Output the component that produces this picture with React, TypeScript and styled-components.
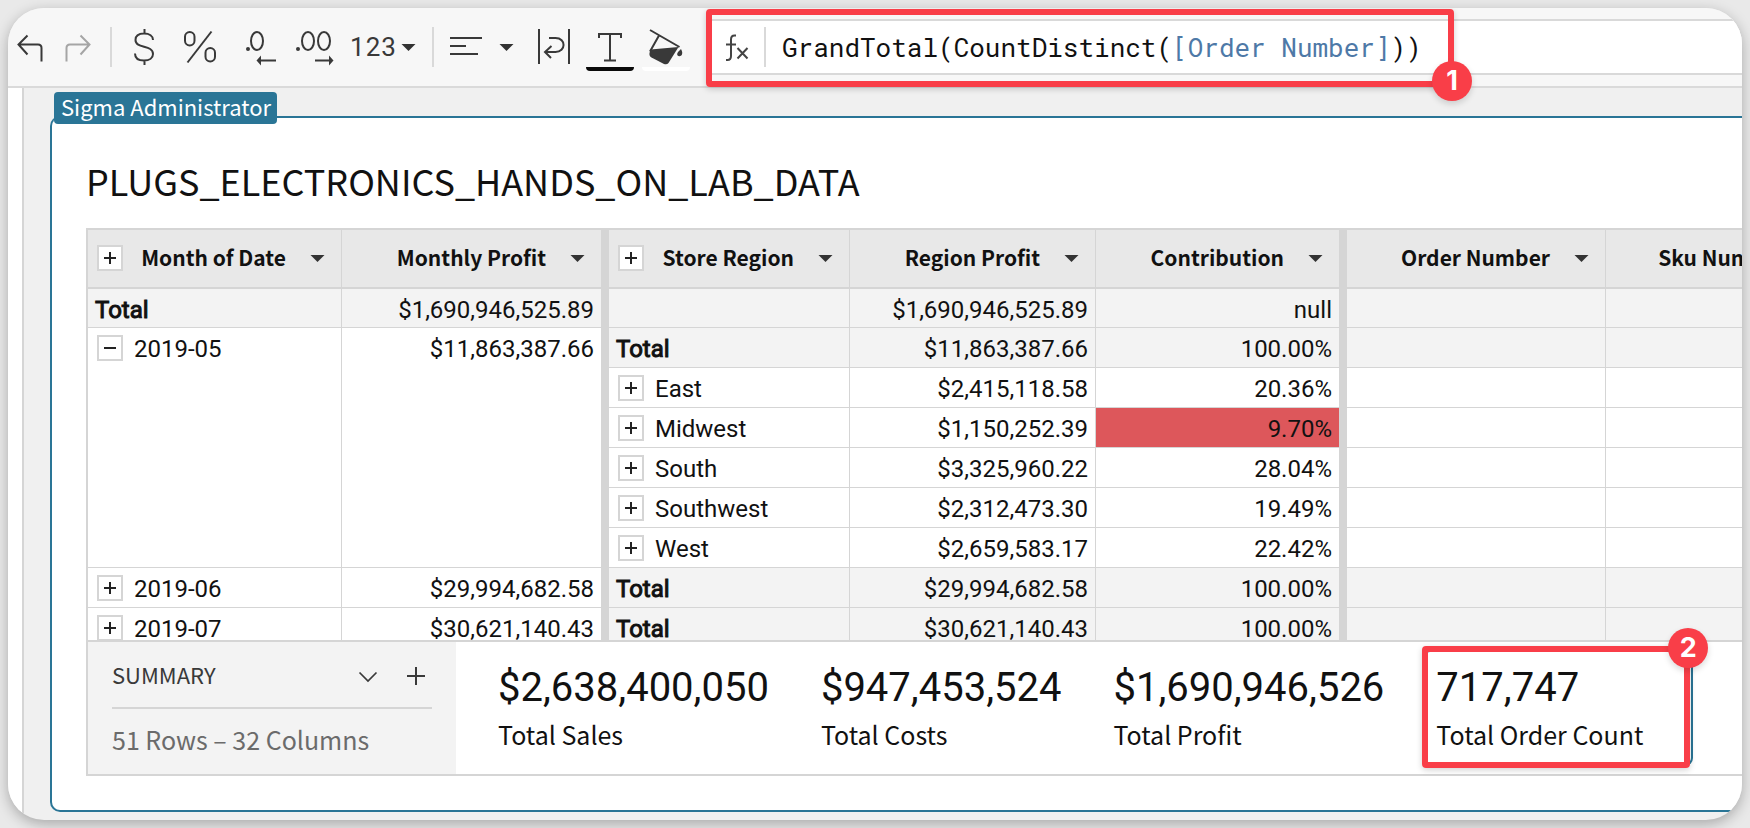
import React from 'react';
import styled, { createGlobalStyle, css } from 'styled-components';

const color = {
  line: '#d5d5d5',
  toolbar: '#f7f7f7',
  canvas: '#f0f0f0',
  header: '#e8e8e8',
  subtle: '#f3f3f3',
  teal: '#2a7596',
  red: '#f93e48',
  alert: '#dd575b',
  icon: '#393939',
  ink: '#111',
  muted: '#6b6b6b',
};

const sans = '"Noto Sans CJK SC", "Noto Sans", sans-serif';
const figures = 'Roboto, "Liberation Sans", sans-serif';
const mono = '"Roboto Mono", "DejaVu Sans Mono", monospace';

const GlobalStyle = createGlobalStyle`
  *, *::before, *::after { box-sizing: border-box; }
  body { margin: 0; background: #e9e9e9; color: ${color.ink}; font-family: ${sans}; }
  button { font: inherit; color: inherit; border: 0; padding: 0; background: none; cursor: pointer; }
`;

const Page = styled.div`
  padding: 8px;
  min-height: 100vh;
`;

const Frame = styled.main`
  display: flex;
  flex-direction: column;
  min-height: calc(100vh - 16px);
  overflow: hidden;
  border-radius: 36px;
  background: ${color.canvas};
  box-shadow: 0 4px 14px rgba(0, 0, 0, 0.28);
`;

/* ---- toolbar ---- */

const Toolbar = styled.header`
  position: relative;
  z-index: 2;
  display: flex;
  align-items: center;
  height: 80px;
  padding-left: 4px;
  border-bottom: 2px solid #dadada;
  background: ${color.toolbar};
`;

const ToolButton = styled.button<{ $width: number; $swatch?: string; $gap?: number }>`
  position: relative;
  display: flex;
  flex: none;
  align-items: center;
  justify-content: center;
  width: ${(p) => p.$width}px;
  height: 56px;
  margin-right: ${(p) => p.$gap ?? 0}px;
  color: ${color.icon};

  svg { display: block; flex: none; }

  &:disabled { color: #a5a5a5; }

  ${(p) =>
    p.$swatch &&
    css`
      &::after {
        content: '';
        position: absolute;
        left: 0;
        right: 0;
        bottom: 4px;
        height: 4px;
        border-radius: 0 0 4px 4px;
        background: ${p.$swatch};
      }
    `}
`;

const FormatButton = styled(ToolButton)`
  gap: 4px;
  font: 400 26px/32px ${figures};
  letter-spacing: 1px;
`;

const Divider = styled.span`
  flex: none;
  width: 2px;
  height: 40px;
  background: #d9d9d9;
`;

const FormulaBar = styled.div`
  position: relative;
  display: flex;
  flex: 1;
  align-items: center;
  height: 56px;
  margin-left: 16px;
  padding-left: 17px;
  border: 2px solid #d9d9d9;
  border-right: 0;
  background: #fff;
`;

const FunctionIcon = styled.span`
  width: 39px;
  color: #444;
  svg { display: block; }
`;

const FormulaInput = styled.div`
  flex: 1;
  padding-left: 16px;
  font: 400 26px/36px ${mono};
  white-space: pre;
  outline: none;
`;

const ColumnRef = styled.span`
  color: #4e79a7;
`;

/* ---- callouts drawn over the page ---- */

const Callout = styled.div`
  position: absolute;
  z-index: 3;
  border: 6px solid ${color.red};
  border-radius: 4px;
  box-shadow: 0 2px 6px rgba(0, 0, 0, 0.18);
  pointer-events: none;
`;

const FormulaCallout = styled(Callout)`
  top: -12px;
  left: -2px;
  width: 748px;
  height: 78px;
`;

const MetricCallout = styled(Callout)`
  inset: -6px 1px -4px -2px;
`;

const Badge = styled.span<{ $corner: 'top' | 'bottom' }>`
  position: absolute;
  right: -24px;
  ${(p) => (p.$corner === 'top' ? 'top: -24px' : 'bottom: -20px')};
  width: 40px;
  height: 40px;
  border-radius: 50%;
  background: ${color.red};
  box-shadow: 0 3px 6px rgba(0, 0, 0, 0.15);
  color: #fff;
  font: 700 27px/40px Inter, sans-serif;
  text-align: center;
`;

/* ---- workspace ---- */

const Workspace = styled.div`
  display: flex;
  flex: 1;
  border-left: 14px solid #fff;
`;

const Canvas = styled.div`
  flex: 1;
  min-width: 0;
  padding: 28px 0 8px 26px;
  border-left: 2px solid ${color.line};
`;

const Element = styled.section`
  position: relative;
  height: 100%;
  padding: 36px 0 30px 34px;
  border: 2px solid ${color.teal};
  border-right: 0;
  border-radius: 10px 0 0 10px;
  background: #fff;
`;

const OwnerTag = styled.span`
  position: absolute;
  top: -26px;
  left: 2px;
  height: 32px;
  padding: 0 6px 0 7px;
  border-radius: 4px;
  background: ${color.teal};
  color: #fff;
  font-size: 22px;
  line-height: 29px;
`;

const Title = styled.h1`
  margin: 0 0 22px;
  font-size: 36px;
  font-weight: 400;
  line-height: 52px;
`;

const Panel = styled.div`
  border: 2px solid ${color.line};
  border-right: 0;
`;

const TableViewport = styled.div`
  height: 410px;
  overflow: hidden;
`;

const Table = styled.table`
  width: 1754px;
  table-layout: fixed;
  border-collapse: separate;
  border-spacing: 0;
  font: 400 24px/34px ${figures};
`;

const rule = css<{ $thick?: boolean }>`
  border-right: ${(p) => (p.$thick ? 8 : 1)}px solid ${color.line};
`;

const HeadCell = styled.th<{ $thick?: boolean }>`
  ${rule}
  height: 59px;
  padding: 0 16px 2px 9px;
  border-bottom: 2px solid ${color.line};
  background: ${color.header};
  font: 600 21px/32px ${sans};
  text-align: left;
`;

const HeadContent = styled.div`
  display: flex;
  align-items: center;
  white-space: nowrap;
`;

const HeadLabel = styled.span`
  margin: 0 24px 0 auto;
  padding-bottom: 2px;
`;

const MenuButton = styled.button`
  flex: none;
  width: 15px;
  height: 24px;
  svg { display: block; }
`;

type CellProps = { $thick?: boolean; $shade?: boolean; $alert?: boolean; $right?: boolean; $first?: boolean };

const Cell = styled.td<CellProps>`
  ${rule}
  height: ${(p) => (p.$first ? 39 : 40)}px;
  padding: 4px 7px 0;
  border-bottom: 1px solid ${color.line};
  background: ${(p) => (p.$alert ? color.alert : p.$shade ? color.subtle : '#fff')};
  text-align: ${(p) => (p.$right ? 'right' : 'left')};
  vertical-align: top;
  white-space: nowrap;
`;

const TotalLabel = styled.span`
  -webkit-text-stroke: 1px currentColor;
`;

const ExpandButton = styled.button`
  display: flex;
  flex: none;
  align-items: center;
  justify-content: center;
  width: 26px;
  height: 26px;
  border: 2px solid ${color.line};
  background: #fff;
  color: #222;
`;

const GroupLabel = styled.div`
  display: flex;
  align-items: center;
  gap: 11px;
  padding-left: 2px;

  ${ExpandButton} { margin-bottom: 2px; }
`;

/* ---- summary bar ---- */

const Summary = styled.div`
  display: flex;
  height: 134px;
  border-top: 2px solid ${color.line};
`;

const SummarySide = styled.div`
  flex: none;
  width: 368px;
  padding: 12px 24px 0;
  background: ${color.subtle};
`;

const SummaryHead = styled.div`
  display: flex;
  align-items: center;
  gap: 24px;
  height: 55px;
  padding-bottom: 9px;
  border-bottom: 2px solid ${color.line};
  color: ${color.icon};
`;

const SummaryTitle = styled.h2`
  flex: 1;
  margin: 0 0 4px;
  font-size: 22px;
  font-weight: 400;
  line-height: 32px;
`;

const SummaryAction = styled.button`
  width: 24px;
  height: 24px;
  margin-right: 4px;
  & + & { margin-left: -4px; }
  svg { display: block; }
`;

const RowCount = styled.p`
  margin: 12px 0 0;
  color: ${color.muted};
  font-size: 25px;
  line-height: 36px;
`;

const Metrics = styled.div`
  display: flex;
  flex: none;
  padding: 8px 0 8px 28px;
`;

const Metric = styled.div<{ $selected?: boolean }>`
  position: relative;
  padding: 14px ${(p) => (p.$selected ? 48 : 36)}px 0 12px;
  border: 2px solid ${(p) => (p.$selected ? color.teal : 'transparent')};
  border-radius: 8px;
  white-space: nowrap;
`;

const MetricValue = styled.div`
  font: 400 40px/44px ${figures};
`;

const MetricLabel = styled.div`
  padding-top: 6px;
  font-size: 25px;
  line-height: 36px;
`;

/* ---- icons ---- */

const Caret = () => (
  <svg width="15" height="24" viewBox="0 0 15 24" aria-hidden="true">
    <path d="M0.5 9h14l-7 7z" fill="#333" />
  </svg>
);

type IconProps = { w: number; h?: number; children: React.ReactNode };

const Icon = ({ w, h = 40, children }: IconProps) => (
  <svg width={w} height={h} viewBox={`0 0 ${w} ${h}`} fill="none" stroke="currentColor" strokeWidth="2" aria-hidden="true">
    {children}
  </svg>
);

const Expander = ({ open = false, label }: { open?: boolean; label: string }) => (
  <ExpandButton aria-label={`${open ? 'Collapse' : 'Expand'} ${label}`} aria-expanded={open}>
    <svg width="14" height="14" viewBox="0 0 14 14" stroke="currentColor" strokeWidth="2" aria-hidden="true">
      <path d={open ? 'M1 7h12' : 'M1 7h12M7 1v12'} />
    </svg>
  </ExpandButton>
);

/* ---- data ---- */

const columns = [
  { name: 'Month of Date', width: 254, group: true },
  { name: 'Monthly Profit', width: 267, thick: true },
  { name: 'Store Region', width: 241, group: true },
  { name: 'Region Profit', width: 246 },
  { name: 'Contribution', width: 251, thick: true },
  { name: 'Order Number', width: 259 },
  { name: 'Sku Number', width: 236 },
];

type Row = {
  month?: string;
  span?: number;
  monthProfit?: string;
  region?: string;
  profit: string;
  share: string;
  low?: boolean;
};

const rows: Row[] = [
  { month: 'Total', monthProfit: '$1,690,946,525.89', region: '', profit: '$1,690,946,525.89', share: 'null' },
  { month: '2019-05', span: 6, monthProfit: '$11,863,387.66', region: 'Total', profit: '$11,863,387.66', share: '100.00%' },
  { region: 'East', profit: '$2,415,118.58', share: '20.36%' },
  { region: 'Midwest', profit: '$1,150,252.39', share: '9.70%', low: true },
  { region: 'South', profit: '$3,325,960.22', share: '28.04%' },
  { region: 'Southwest', profit: '$2,312,473.30', share: '19.49%' },
  { region: 'West', profit: '$2,659,583.17', share: '22.42%' },
  { month: '2019-06', monthProfit: '$29,994,682.58', region: 'Total', profit: '$29,994,682.58', share: '100.00%' },
  { month: '2019-07', monthProfit: '$30,621,140.43', region: 'Total', profit: '$30,621,140.43', share: '100.00%' },
];

const metrics = [
  { value: '$2,638,400,050', label: 'Total Sales' },
  { value: '$947,453,524', label: 'Total Costs' },
  { value: '$1,690,946,526', label: 'Total Profit' },
  { value: '717,747', label: 'Total Order Count', selected: true },
];

const FormatToolbar = () => (
  <Toolbar>
    <ToolButton $width={36} $gap={12} aria-label="Undo">
      <Icon w={28}><path d="M11.5 8.500L2.500 17.500l9 10M3 17.500h19q3.500 0 3.500 3.500v13.500" /></Icon>
    </ToolButton>
    <ToolButton $width={36} $gap={14} aria-label="Redo" disabled>
      <Icon w={28}><path d="M16.500 8.500l9 9-9 10M25 17.500H6q-3.500 0-3.500 3.500v13.500" /></Icon>
    </ToolButton>
    <Divider />
    <ToolButton $width={64} $gap={-6} aria-label="Currency">
      <Icon w={36}>
        <path d="M27 13c0-4-3.500-6.500-9-6.500S9.500 9 9.500 13c0 9 17.500 4.500 17.500 14 0 4-3.500 6.500-9 6.500S9 31 9 26.500M18.500 2v5M18.500 33v5" />
      </Icon>
    </ToolButton>
    <ToolButton $width={60} $gap={7} aria-label="Percent">
      <Icon w={36}>
        <rect x="3" y="5" width="9.500" height="13.500" rx="4.750" />
        <rect x="23.500" y="21" width="9.500" height="13.500" rx="4.750" />
        <path d="M29.500 4.500l-24 31" />
      </Icon>
    </ToolButton>
    <ToolButton $width={48} $gap={1} aria-label="Decrease decimal places">
      <Icon w={36}>
        <circle cx="5" cy="22" r="2" fill="currentColor" stroke="none" />
        <ellipse cx="14" cy="14" rx="6" ry="9" />
        <path d="M17 33.500h16" />
        <path d="M13.500 33.500l4.500-5v10z" fill="currentColor" stroke="none" />
      </Icon>
    </ToolButton>
    <ToolButton $width={56} $gap={7} aria-label="Increase decimal places">
      <Icon w={40}>
        <circle cx="4" cy="22" r="2" fill="currentColor" stroke="none" />
        <ellipse cx="14" cy="14" rx="6" ry="9" />
        <ellipse cx="30" cy="14" rx="6" ry="9" />
        <path d="M21 33.500h15" />
        <path d="M39.500 33.500l-4.500-5v10z" fill="currentColor" stroke="none" />
      </Icon>
    </ToolButton>
    <FormatButton $width={68} $gap={15} aria-label="Number format">
      123
      <Caret />
    </FormatButton>
    <Divider />
    <ToolButton $width={64} aria-label="Text alignment">
      <Icon w={32}><path d="M0 11h32M0 19h16M0 27h28" /></Icon>
    </ToolButton>
    <ToolButton $width={16} $gap={14} aria-label="More alignment options"><Caret /></ToolButton>
    <ToolButton $width={52} $gap={6} aria-label="Wrap text">
      <Icon w={34}>
        <path d="M2 2v35M32 2v35M12 11h6.500c11 0 10.500 14 0 14H9M14.500 19L8 25l6 6" />
      </Icon>
    </ToolButton>
    <ToolButton $width={48} $gap={8} $swatch="#0a0a0a" aria-label="Text color">
      <Icon w={28}><path d="M3 11V7h22v4M14 7v26.500M8 33.500h12" /></Icon>
    </ToolButton>
    <ToolButton $width={48} $swatch="#fff" aria-label="Fill color">
      <Icon w={36}>
        <path d="M2 3l29.500 17M11 8.500L2 24.500" />
        <path d="M2.500 22.500L30.500 20 20.500 36Q19 38 16 37L3.500 30.500Q1 29 1.500 26z" fill="currentColor" stroke="none" />
        <path d="M33 22c5 9-7 9-3 3z" fill="currentColor" stroke="none" />
      </Icon>
    </ToolButton>
    <FormulaBar>
      <FunctionIcon>
        <Icon w={24} h={30}>
          <path d="M11 3.500H9.500Q6 3.500 6 7.500V24q0 4-3.500 4H1M1 12.500h10M12.500 16l10 10.500M22.500 16l-10 10.500" />
        </Icon>
      </FunctionIcon>
      <Divider />
      <FormulaInput role="textbox" aria-label="Formula" contentEditable suppressContentEditableWarning spellCheck={false}>
        GrandTotal(CountDistinct(<ColumnRef>[Order Number]</ColumnRef>))
      </FormulaInput>
      <FormulaCallout>
        <Badge $corner="bottom">1</Badge>
      </FormulaCallout>
    </FormulaBar>
  </Toolbar>
);

const DataTable = () => (
  <Table>
    <colgroup>
      {columns.map((c) => (
        <col key={c.name} width={c.width} />
      ))}
    </colgroup>
    <thead>
      <tr>
        {columns.map((c) => (
          <HeadCell key={c.name} scope="col" $thick={c.thick}>
            <HeadContent>
              {c.group && <Expander label={c.name} />}
              <HeadLabel>{c.name}</HeadLabel>
              <MenuButton aria-label={`${c.name} menu`}><Caret /></MenuButton>
            </HeadContent>
          </HeadCell>
        ))}
      </tr>
    </thead>
    <tbody>
      {rows.map((r, i) => {
        const first = i === 0;
        const shade = first || r.region === 'Total';
        return (
          <tr key={i}>
            {r.month && (
              <>
                <Cell rowSpan={r.span} $shade={first} $first={first}>
                  {first ? (
                    <TotalLabel>Total</TotalLabel>
                  ) : (
                    <GroupLabel>
                      <Expander open={!!r.span} label={r.month} />
                      {r.month}
                    </GroupLabel>
                  )}
                </Cell>
                <Cell rowSpan={r.span} $shade={first} $first={first} $thick $right>{r.monthProfit}</Cell>
              </>
            )}
            <Cell $shade={shade} $first={first}>
              {r.region === 'Total' && <TotalLabel>Total</TotalLabel>}
              {r.region && r.region !== 'Total' && (
                <GroupLabel>
                  <Expander label={r.region} />
                  {r.region}
                </GroupLabel>
              )}
            </Cell>
            <Cell $shade={shade} $first={first} $right>{r.profit}</Cell>
            <Cell $shade={shade} $first={first} $alert={r.low} $thick $right>{r.share}</Cell>
            <Cell $shade={shade} $first={first} />
            <Cell $shade={shade} $first={first} />
          </tr>
        );
      })}
    </tbody>
  </Table>
);

const SummaryBar = () => (
  <Summary>
    <SummarySide>
      <SummaryHead>
        <SummaryTitle>SUMMARY</SummaryTitle>
        <SummaryAction aria-label="Collapse summary">
          <Icon w={24} h={24}><path d="M3.500 8.500l8.500 8.500 8.500-8.500" strokeWidth="1.700" /></Icon>
        </SummaryAction>
        <SummaryAction aria-label="Add summary">
          <Icon w={24} h={24}><path d="M3 12h18M12 3v18" /></Icon>
        </SummaryAction>
      </SummaryHead>
      <RowCount>51 Rows – 32 Columns</RowCount>
    </SummarySide>
    <Metrics>
      {metrics.map((m) => (
        <Metric key={m.label} $selected={m.selected}>
          <MetricValue>{m.value}</MetricValue>
          <MetricLabel>{m.label}</MetricLabel>
          {m.selected && (
            <MetricCallout>
              <Badge $corner="top">2</Badge>
            </MetricCallout>
          )}
        </Metric>
      ))}
    </Metrics>
  </Summary>
);

export default function App() {
  return (
    <Page>
      <GlobalStyle />
      <Frame>
        <FormatToolbar />
        <Workspace>
          <Canvas>
            <Element>
              <OwnerTag>Sigma Administrator</OwnerTag>
              <Title>PLUGS_ELECTRONICS_HANDS_ON_LAB_DATA</Title>
              <Panel>
                <TableViewport>
                  <DataTable />
                </TableViewport>
                <SummaryBar />
              </Panel>
            </Element>
          </Canvas>
        </Workspace>
      </Frame>
    </Page>
  );
}
